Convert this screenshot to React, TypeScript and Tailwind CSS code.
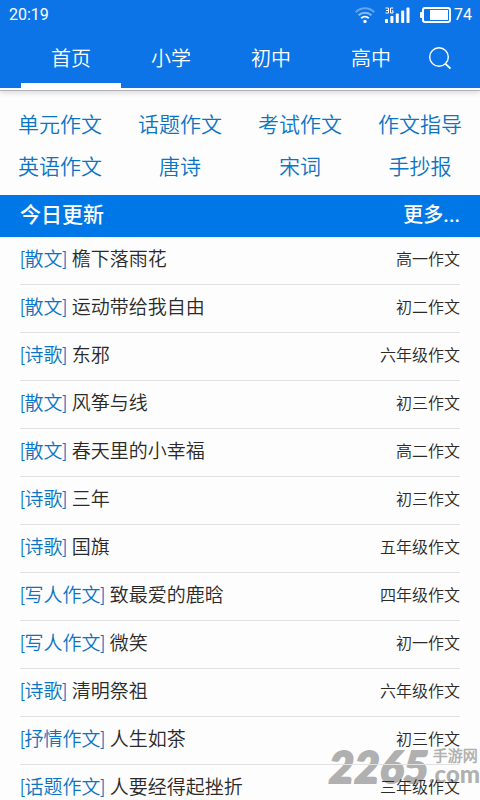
const tabs = ["首页", "小学", "初中", "高中"];

const categories = [
  "单元作文", "话题作文", "考试作文", "作文指导",
  "英语作文", "唐诗", "宋词", "手抄报",
];

const articles = [
  { kind: "散文", title: "檐下落雨花", level: "高一作文" },
  { kind: "散文", title: "运动带给我自由", level: "初二作文" },
  { kind: "诗歌", title: "东邪", level: "六年级作文" },
  { kind: "散文", title: "风筝与线", level: "初三作文" },
  { kind: "散文", title: "春天里的小幸福", level: "高二作文" },
  { kind: "诗歌", title: "三年", level: "初三作文" },
  { kind: "诗歌", title: "国旗", level: "五年级作文" },
  { kind: "写人作文", title: "致最爱的鹿晗", level: "四年级作文" },
  { kind: "写人作文", title: "微笑", level: "初一作文" },
  { kind: "诗歌", title: "清明祭祖", level: "六年级作文" },
  { kind: "抒情作文", title: "人生如茶", level: "初三作文" },
  { kind: "话题作文", title: "人要经得起挫折", level: "三年级作文" },
];

function WifiIcon() {
  return (
    <svg width="20" height="18" viewBox="0 0 20 18" fill="none" stroke="#fff" strokeWidth="2" aria-hidden="true">
      <path d="M0.8 6.2C6 1 14 1 19.2 6.2" opacity="0.35" />
      <path d="M3.6 9.3C7.2 5.8 12.8 5.8 16.4 9.3" opacity="0.5" />
      <path d="M6.2 12.3C8.4 10.2 11.6 10.2 13.8 12.3" />
      <circle cx="10" cy="15.4" r="1.7" fill="#fff" stroke="none" />
    </svg>
  );
}

function SignalIcon() {
  return (
    <svg width="25" height="18" viewBox="0 0 25 18" fill="#fff" aria-hidden="true">
      <rect x="0" y="13" width="3" height="4" rx="0.8" />
      <rect x="5.4" y="10" width="3" height="7" rx="0.8" />
      <rect x="10.8" y="7.5" width="3" height="9.5" rx="0.8" />
      <rect x="16.2" y="4.5" width="3" height="12.5" rx="0.8" />
      <rect x="21.5" y="1.5" width="3" height="15.5" rx="0.8" />
      <path d="M0.5 2H3.5V7H0.5M1 4.5H3.5M8.2 2H5.5V7H8V4.8H6.8" fill="none" stroke="#fff" strokeWidth="1" />
    </svg>
  );
}

function BatteryIcon() {
  return (
    <svg width="31" height="16" viewBox="0 0 31 16" aria-hidden="true">
      <rect x="0" y="5" width="3" height="6" rx="1" fill="#fff" />
      <rect x="3" y="1" width="27" height="14" rx="2" fill="none" stroke="#fff" strokeWidth="2" />
      <rect x="10" y="3" width="18" height="10" fill="#fff" />
    </svg>
  );
}

function SearchIcon() {
  return (
    <svg width="24" height="24" viewBox="0 0 24 24" fill="none" stroke="#fff" strokeWidth="1.4" aria-hidden="true">
      <circle cx="10" cy="10" r="9.3" />
      <path d="M16.4 16.8L21.5 21.5" strokeWidth="1.8" />
    </svg>
  );
}

export default function App() {
  return (
    <div className="relative flex h-screen flex-col overflow-hidden bg-[#fdfdfd] font-['Roboto','Noto_Sans_CJK_SC_DemiLight','Noto_Sans_CJK_SC',sans-serif] text-[#2a2a2a]">
      <header className="relative shrink-0 border-b border-[#b0b4b8] bg-[#0d74e7] text-white shadow-[0_2px_5px_rgba(0,0,0,0.14)]">
        <div className="flex h-[30px] items-center pr-2 pl-[9px] text-[16px] leading-5">
          <span>20:19</span>
          <div className="ml-auto flex items-center">
            <WifiIcon />
            <span className="ml-[10px] flex"><SignalIcon /></span>
            <span className="mr-[3px] ml-[10px] flex"><BatteryIcon /></span>
            <span>74</span>
          </div>
        </div>
        <nav className="flex h-[60px] border-b-2 border-white pr-[19px] pl-[21px]">
          {tabs.map((tab, i) => (
            <button
              key={tab}
              type="button"
              className={`flex-1 border-b-[5px] pt-[5px] text-[20px] leading-6 font-light ${i === 0 ? "border-white" : "border-transparent"}`}
            >
              {tab}
            </button>
          ))}
          <button type="button" aria-label="搜索" className="flex w-10 items-center justify-center">
            <SearchIcon />
          </button>
        </nav>
      </header>

      <nav className="grid shrink-0 grid-cols-4 pt-[13px] pb-[7px]">
        {categories.map((name) => (
          <a key={name} href="#" className="flex h-[42px] items-center justify-center text-[21px] leading-6 font-light text-[#0b74c4]">
            {name}
          </a>
        ))}
      </nav>

      <section className="z-10 min-h-0 flex-1 overflow-y-auto [scrollbar-width:none]">
        <div className="flex h-[42px] items-center justify-between bg-[#0077e6] px-5 pb-[3px] font-['Roboto','Noto_Sans_CJK_SC',sans-serif] leading-6 font-medium text-white">
          <h2 className="text-[21px]">今日更新</h2>
          <a href="#" className="text-[20px]">更多...</a>
        </div>
        <ul className="px-5">
          {articles.map((a) => (
            <li key={a.title} className="flex h-12 items-center justify-between border-b border-[#e2e2e2] pb-[2px] font-light">
              <a href="#" className="text-[19px] leading-6">
                <span className="text-[#0b74c4]">[{a.kind}]</span> {a.title}
              </a>
              <span className="text-[16px] leading-6">{a.level}</span>
            </li>
          ))}
        </ul>
      </section>

      <div className="pointer-events-none absolute right-0 bottom-[14px] flex items-center text-[#b0b0b0]">
        <span className="font-['Lato',sans-serif] text-[44px] leading-10 font-black italic [-webkit-text-stroke:2px_#b0b0b0]">2265</span>
        <span className="flex flex-col font-bold">
          <span className="pl-1 text-[15px] leading-4">手游网</span>
          <span className="font-['Lato',sans-serif] text-[24px] leading-5 font-black">.com</span>
        </span>
      </div>
    </div>
  );
}
